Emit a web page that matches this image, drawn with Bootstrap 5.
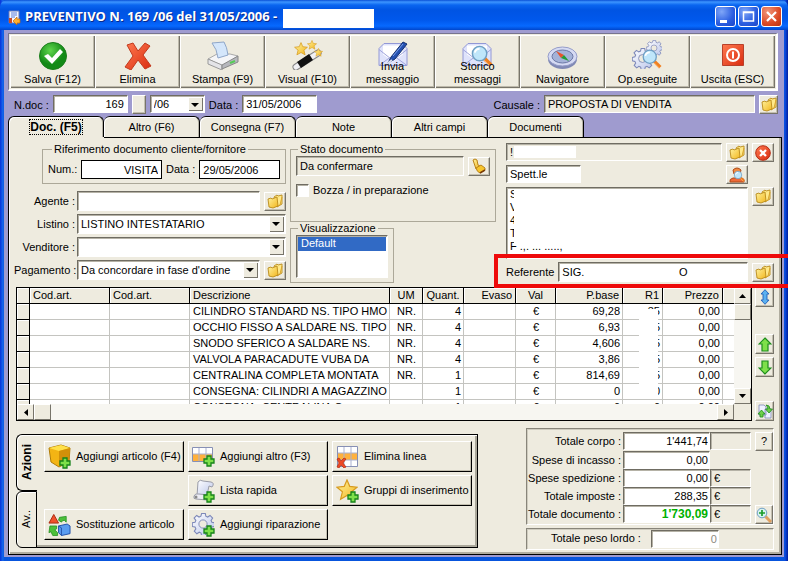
<!DOCTYPE html>
<html lang="it">
<head>
<meta charset="utf-8">
<meta name="viewport" content="width=device-width, initial-scale=1">
<title>Preventivo N. 169 /06</title>
<link href="https://cdn.jsdelivr.net/npm/bootstrap@5.3.0/dist/css/bootstrap.min.css" rel="stylesheet">
<style>
:root{--face:#eeebdf;--shade:#aca899;--dark:#7a776c;--lav:#9f9bcf}
body{font:11px/13px "Liberation Sans",Arial,sans-serif;color:#000;background:#0a3fd8}
button,input,select,textarea{font:inherit;color:inherit;border-radius:0}
label{white-space:nowrap}
svg{flex:none}
.win{min-height:100vh;background:linear-gradient(90deg,#0831d9,#166aee 3px,#0855dd 4px,#0855dd calc(100% - 4px),#0a4be0 calc(100% - 3px),#001d9e)}
.titlebar{height:30px;padding:2px 6px 0 8px;background:linear-gradient(#0a50d6,#3d95ff 2px,#0a66f0 5px,#0054e3 10px,#0058ec 20px,#0669ff 26px,#0046cc);border-radius:7px 7px 0 0}
.titlebar h1{font:bold 13px/16px "Open Sans","Noto Sans",sans-serif;color:#fff;text-shadow:1px 1px #0a2a8a;margin:2px 0 0 4px;white-space:nowrap}
.blank-title{width:91px;height:19px;background:#fff;margin:7px 0 0 6px}
.caps{gap:2px}
.cap{width:21px;height:21px;padding:0;border:1px solid #fff;border-radius:3px;background:radial-gradient(circle at 30% 25%,#7fa6f8,#2a5de0 60%,#1b46c8)}
.cap.shut{background:radial-gradient(circle at 30% 25%,#f0967a,#dc4a26 60%,#b83210)}
.cap svg{display:block}
.client{background:var(--lav);margin:0 4px 4px;padding:3px 2px 2px 4px}
.tools{margin:0 4px 0 0;padding:1px;background:var(--face);border:1px solid;border-color:#77748f #fff #fff #77748f;border-right-width:2px;border-bottom-width:2px}
.tool{flex:1 1 0;height:53px;padding:0 0 2px;background:var(--face);border:0;box-shadow:inset 1px 1px #fff,inset -1px -1px #77746a,inset -2px -2px #bdb9aa;display:flex;flex-direction:column;align-items:center;justify-content:flex-end}
.tool svg{margin-bottom:3px}
.tool.two svg{margin-bottom:-7px}
.info{padding:4px 4px 0 6px;height:25px}
.field{height:18px;padding:0 3px;background:#fff;border:1px solid;border-color:#6f6c62 #fff #fff #6f6c62;box-shadow:inset 1px 1px #b5b2a6;min-width:0;outline:0;border-radius:0}
.field.flat{background:var(--face)}
.field.line{border:1px solid #000;box-shadow:none;height:19px}
.field.tall{height:20px}
.field.cause{flex:0 1 211px}
.pick{position:relative;display:flex;min-width:0}
.pick select{appearance:none;width:100%;padding-right:17px}
.pick::before{content:"";position:absolute;right:2px;top:2px;bottom:2px;width:15px;background:var(--face);box-shadow:inset 1px 1px #fff,inset -1px -1px #77746a;pointer-events:none}
.pick::after{content:"";position:absolute;right:6px;top:8px;border:4px solid transparent;border-top-color:#000;border-bottom:0;pointer-events:none}
.mini{padding:0;width:22px;height:19px;background:var(--face);border:1px solid;border-color:#fff #77746a #77746a #fff;box-shadow:inset -1px -1px #c3bfb0;display:flex;align-items:center;justify-content:center;flex:none}
.w14{width:14px}.w19{width:19px}.w54{width:55px}.w75{width:75px}.w82{width:82px}.w41{width:41px;flex:none}.w17{width:18px;flex:none}
.sheets{height:21px}
.sheet{width:96px;height:21px;padding:0;border:1px solid #000;border-left-width:0;border-bottom:0;border-radius:6px 6px 0 0;background:var(--face);box-shadow:inset 1px 1px #fff,inset -1px 0 #b5b2a6}
.sheet.on{border-left-width:1px;height:22px;font-weight:bold;font-size:12px;position:relative}
.sheet.on span{outline:1px dotted #000}
.panelx{background:var(--face);border:1px solid #000;border-top:0;box-shadow:inset 1px 0 #fff,inset -2px -2px #b0ad9f;padding:6px 7px 4px 5px;position:relative;flex:1}
.panelx::before{content:"";position:absolute;left:95px;right:0;top:0;border-top:1px solid #000}
.head{display:grid;grid-template-columns:minmax(0,272fr) minmax(0,206fr) minmax(0,274fr);column-gap:4px}
.head>:last-child{margin-left:6px}
.group{border:1px solid var(--shade);box-shadow:none;padding:0 5px;margin:0;min-width:0}
.group legend{float:none;width:auto;font-size:11px;line-height:13px;margin:0 0 0 2px;padding:0 2px}
.cap-l{width:63px;text-align:right;padding-right:2px;flex:none}
.first{margin-left:28px}
.stack{gap:3px}
.tick{appearance:none;width:13px;height:13px;margin:0;background:#fff;border:1px solid;border-color:#6f6c62 #fff #fff #6f6c62;box-shadow:inset 1px 1px #b5b2a6}
.listing{width:92px;height:43px;padding:1px;overflow:hidden;display:block}
.listing option{padding:0 3px;min-height:14px;line-height:14px}
.listing option:checked{background:#316ac5 linear-gradient(#316ac5,#316ac5);color:#fff}
.group.view{width:104px}
.hide{position:absolute;background:#fff}
.beside{margin-right:26px}
.mask-name{left:8px;top:3px;width:62px;height:12px}
.mask-addr{left:8px;top:3px;width:72px;height:55px}
.memo{height:72px;resize:none;line-height:13px;padding:0 3px;overflow:hidden;display:block;width:100%}
.frame-red{position:absolute;left:-12px;right:-20px;top:111px;height:34px;border:4px solid #ee0a0a;pointer-events:none}
.gridbox{border:1px solid #000;background:#fff;margin-left:2px}
.rows{height:116px;overflow:hidden}
.rows table{table-layout:fixed;width:100%;border-collapse:separate;border-spacing:0;line-height:15px}
.rows th{font-weight:normal;background:var(--face);border-right:1px solid #000;border-bottom:1px solid #000;box-shadow:inset 1px 1px #fff;height:16px;padding:0 3px;white-space:nowrap;overflow:hidden}
.rows td{height:16px;padding:0 2px 0 3px;border-right:1px solid #c4c4c0;border-bottom:1px solid #c4c4c0;white-space:nowrap;overflow:hidden}
.rows td:first-child{background:var(--face);border-color:#000;box-shadow:inset 1px 1px #fff}
.rows td.open{overflow:visible;position:relative}
.open .hide{left:16px;right:4px;top:5px;height:86px}
.track{background:#f7f6f1}
.vtrack{width:17px}
.sb{width:17px;height:16px;padding:0;background:var(--face);border:1px solid;border-color:#fff #77746a #77746a #fff;display:flex;align-items:center;justify-content:center}
.side{width:19px;margin-left:3px}
.side .mini{width:19px;height:20px}
.gap-a{margin-top:27px}.gap-b{margin-top:3px}.gap-c{margin-top:24px}
.foot{margin:7px 0 0 2px}
.acts{margin-top:6px;flex:none}
.vtabs{width:21px;margin-right:-1px;position:relative}
.vtabs button{writing-mode:vertical-rl;transform:rotate(180deg);height:57px;width:21px;padding:0;border:1px solid #000;border-radius:0 6px 6px 0;background:var(--face);box-shadow:inset -1px -1px #fff}
.vtabs .on{border-left:0;font-weight:bold;font-size:12px}
.pad{border:1px solid #000;border-left:0;box-shadow:inset 0 1px #fff,inset -2px -2px #aaa79a;padding:6px 5px 7px 8px;display:grid;grid-template-columns:repeat(3,140px);grid-auto-rows:31px;gap:3px 4px}
.act{padding:0 0 0 3px;background:var(--face);border:1px solid;border-color:#fff #000 #000 #fff;box-shadow:inset -1px -1px #c3bfb0;display:flex;align-items:center;gap:5px;text-align:left;white-space:nowrap}
.sums{width:248px}
.sunk{border:1px solid;border-color:#88857a #fff #fff #88857a;box-shadow:inset 1px 1px #cfccbf}
.sunk label{text-align:right;padding:3px 2px 0 0}
.totbox{padding-top:3px;margin-bottom:3px}
.weight{padding-bottom:1px}
.tot{width:87px;text-align:right;padding-right:1px;flex:none}
.tot.short{width:68px;margin:1px 0 0 8px;color:#8d8a80}
.strong{color:#00b100;font-weight:bold;font-size:12px}
</style>
<script src="https://cdn.jsdelivr.net/npm/bootstrap@5.3.0/dist/js/bootstrap.bundle.min.js"></script>
</head>
<body>
<svg width="0" height="0" class="position-absolute" aria-hidden="true">
<defs>
<radialGradient id="gGreen" cx=".4" cy=".3"><stop offset="0" stop-color="#5fd64c"/><stop offset="1" stop-color="#138a17"/></radialGradient>
<linearGradient id="gRed" x2="1" y2="1"><stop offset="0" stop-color="#ff7a50"/><stop offset="1" stop-color="#d92c10"/></linearGradient>
<linearGradient id="gGold" x2="1" y2="1"><stop offset="0" stop-color="#fff3a0"/><stop offset="1" stop-color="#f2b61c"/></linearGradient>
<linearGradient id="gPaper" x2="1" y2="1"><stop offset="0" stop-color="#fff"/><stop offset="1" stop-color="#b9c4ea"/></linearGradient>
<symbol id="plus" viewBox="0 0 12 12"><path d="M4 1h4v3h3v4H8v3H4V8H1V4h3z" fill="#7ee04a" stroke="#16831a" stroke-width="1.3"/></symbol>
<symbol id="folder" viewBox="0 0 16 15"><path d="M7 3l3-2 1 1 4-1v9l-5 3z" fill="#ffe98a" stroke="#b98a1a" stroke-width=".9"/><path d="M1 5l3-1 1 1 5-2 1 9-5 2-4-1z" fill="url(#gGold)" stroke="#b98a1a" stroke-width=".9"/><path d="M11 12l2-1 2-8" fill="none" stroke="#d9a52a"/></symbol>
<symbol id="gear" viewBox="0 0 24 24"><path d="M10 1h4l.6 3 2 .9 2.600-1.700 2.800 2.800-1.700 2.600.9 2 3 .6v4l-3 .6-.9 2 1.700 2.600-2.800 2.800-2.600-1.700-2 .9-.6 3h-4l-.6-3-2-.9-2.600 1.700-2.800-2.800 1.700-2.600-.9-2-3-.6v-4l3-.6.9-2L1.800 6l2.800-2.800 2.600 1.700 2-.9z" transform="translate(.5 -.5)" fill="url(#gPaper)" stroke="#7d88b8" stroke-width="1.200"/><circle cx="12" cy="12" r="4.500" fill="#eeebdf" stroke="#7d88b8"/></symbol>
<symbol id="env" viewBox="0 0 30 24"><path d="M1 6l5-5h18l5 5v17H1z" fill="#dfe3fb" stroke="#9298d6"/><path d="M5 3h20v9l-10 7-10-7z" fill="#fff"/><path d="M1 7l14 11L29 7M1 23l11-8M29 23l-11-8" fill="none" stroke="#a0a5dc"/></symbol>
<symbol id="lens" viewBox="0 0 24 24"><path d="M15 15l7 7" stroke="#f08020" stroke-width="4"/><path d="M15 17l6 6" stroke="#ffc080"/><circle cx="10" cy="10" r="7.500" fill="#bfe6fa" stroke="#6f9fc4" stroke-width="1.500"/><path d="M5 9q1-4 5-4" stroke="#fff" stroke-width="2" fill="none"/></symbol>
<symbol id="star" viewBox="0 0 24 24"><path d="M12 1l3 7 8 1-6 5 2 8-7-4-7 4 2-8-6-5 8-1z" fill="url(#gGold)" stroke="#d79a1e" stroke-width="1.300"/></symbol>
<symbol id="sheetgrid" viewBox="0 0 21 21"><path d="M.5.500h20v20H.5z" fill="#fff" stroke="#8790b5"/><path d="M1 7h19v7H1z" fill="#ffb13d"/><path d="M7 1v19M14 1v19M1 7h19M1 14h19" stroke="#aab1d0"/></symbol>
<symbol id="arrowup" viewBox="0 0 14 15"><path d="M7 1l6 6H10v7H4V7H1z" fill="#7ee04a" stroke="#1d8d1d" stroke-width="1.200"/></symbol>
</defs>
</svg>

<main class="win d-flex flex-column">
<header class="titlebar d-flex align-items-start">
  <svg class="mt-2" width="13" height="16" viewBox="0 0 13 16"><path d="M1 1h10v12H1z" fill="#f4f6ff" stroke="#6878b8"/><path d="M3 3h6M3 5h6M3 7h4" stroke="#5f7fd8"/><path d="M1 8h3v5H1z" fill="#c84a2a"/><path d="M5 11l4-4v2h3v4H9v2z" fill="#ffb030" stroke="#c06a08" stroke-width=".7"/></svg>
  <h1 class="pt-1">PREVENTIVO N. 169 /06 del 31/05/2006 -</h1>
  <div class="blank-title"></div>
  <div class="caps d-flex ms-auto pt-1">
    <button class="cap" aria-label="Riduci"><svg width="19" height="19"><path d="M4 13h7v3H4z" fill="#fff"/></svg></button>
    <button class="cap" aria-label="Ingrandisci"><svg width="19" height="19"><path d="M4.500 5h10v9h-10zM4 5.500h11" fill="none" stroke="#fff" stroke-width="1.500"/></svg></button>
    <button class="cap shut" aria-label="Chiudi"><svg width="19" height="19"><path d="M5 5l9 9M14 5l-9 9" stroke="#fff" stroke-width="2.200"/></svg></button>
  </div>
</header>

<div class="client d-flex flex-column flex-grow-1">
<nav class="tools d-flex" aria-label="Comandi">
  <button class="tool"><svg width="28" height="28" viewBox="0 0 28 28"><circle cx="14" cy="14" r="13.500" fill="url(#gGreen)" stroke="#1b7d1b"/><path d="M5 14l4-2 4 4 8-9 3 3-11 12z" fill="#fff"/></svg>Salva (F12)</button>
  <button class="tool"><svg width="28" height="28" viewBox="0 0 28 28"><path d="M3 3l6-2 5 8 7-8 5 3-7 9 8 11-6 3-7-9-7 10-6-3 8-11z" fill="url(#gRed)" stroke="#c23a1e"/></svg>Elimina</button>
  <button class="tool"><svg width="32" height="29" viewBox="0 0 32 29"><path d="M1 18l9-5h13l8 2-15 10z" fill="#f5f5f7" stroke="#aaa"/><path d="M5 2l12-1q3 5 4 13l-10 3q-1-9-6-15z" fill="#d4e6fb" stroke="#8fa6c8"/><path d="M1 18l14 6v5L1 23z" fill="#e4e4e8" stroke="#999"/><path d="M15 24l16-9v6l-16 7z" fill="#b6b7bd" stroke="#888"/><path d="M23 22l5-2" stroke="#5c5" stroke-width="2"/></svg>Stampa (F9)</button>
  <button class="tool"><svg width="31" height="30" viewBox="0 0 31 30"><path d="M4 27L26 13" stroke="#888" stroke-width="7" stroke-linecap="round"/><path d="M4 27L26 13" stroke="#f1f1f5" stroke-width="5" stroke-linecap="round"/><path d="M7 25l12-8" stroke="#111" stroke-width="7"/><use href="#star" x="2" y="2" width="14" height="14"/><use href="#star" x="15" y="0" width="10" height="10"/><use href="#star" x="22" y="8" width="9" height="9"/></svg>Visual (F10)</button>
  <button class="tool two"><svg width="30" height="26" viewBox="0 0 30 26"><use href="#env" y="1" width="30" height="25"/><path d="M10 22l3-6L25 1l4 2-12 15z" fill="#2450b0" stroke="#14306e"/><path d="M10 22l4-3" stroke="#d8dcec" stroke-width="2"/><path d="M15 15L25 3" stroke="#7ca2ee"/></svg>Invia<br>messaggio</button>
  <button class="tool two"><svg width="32" height="26" viewBox="0 0 32 26"><use href="#env" y="1" width="30" height="25"/><use href="#lens" x="8" y="3" width="23" height="23"/></svg>Storico<br>messaggi</button>
  <button class="tool"><svg width="31" height="24" viewBox="0 0 31 24"><ellipse cx="15.500" cy="13" rx="14.500" ry="10" fill="#8089b5"/><ellipse cx="15.500" cy="10.500" rx="14.500" ry="9.500" fill="#d5daf3" stroke="#969dc9"/><ellipse cx="15.500" cy="10.500" rx="10.500" ry="6.500" fill="#a4b2d8" stroke="#6b77a5"/><path d="M9 5l8 4-3 3z" fill="#e8522a"/><path d="M22 15l-8-3 3-3z" fill="#259b35"/></svg>Navigatore</button>
  <button class="tool"><svg width="31" height="30" viewBox="0 0 31 30"><use href="#gear" x="14" y="0" width="16" height="16"/><use href="#gear" x="0" y="8" width="21" height="21"/><use href="#lens" x="9" y="8" width="21" height="21"/></svg>Op.eseguite</button>
  <button class="tool"><svg width="22" height="26" viewBox="0 0 22 26"><path d="M.5.500h21v21H.5z" fill="url(#gRed)" stroke="#b8402a"/><circle cx="11" cy="11" r="6" fill="none" stroke="#fff" stroke-width="2"/><path d="M11 7.500v7" stroke="#fff" stroke-width="2"/></svg>Uscita (ESC)</button>
</nav>

<div class="info d-flex align-items-start">
  <label for="ndoc" class="me-1 pt-1">N.doc :</label>
  <input id="ndoc" class="field w75 text-end" value="169">
  <button class="mini w14 mx-1" aria-label="Numero"></button>
  <div class="pick w54"><select id="anno" class="field" aria-label="Anno"><option>/06</option></select></div>
  <label for="data" class="mx-1 pt-1">Data :</label>
  <input id="data" class="field w75" value="31/05/2006">
  <label for="causale" class="ms-auto me-1 pt-1">Causale :</label>
  <input id="causale" class="field flat cause" value="PROPOSTA DI VENDITA">
  <button class="mini w19 ms-1" aria-label="Apri causale"><svg width="16" height="15"><use href="#folder"/></svg></button>
</div>

<div class="sheets d-flex" role="tablist">
  <button class="sheet on" role="tab" aria-selected="true"><span>Doc. (F5)</span></button>
  <button class="sheet" role="tab">Altro (F6)</button>
  <button class="sheet" role="tab">Consegna (F7)</button>
  <button class="sheet" role="tab">Note</button>
  <button class="sheet" role="tab">Altri campi</button>
  <button class="sheet" role="tab">Documenti</button>
</div>

<div class="panelx">
<div class="head">
  <div class="d-flex flex-column stack">
    <fieldset class="group first pb-1"><legend class="ms-1">Riferimento documento cliente/fornitore</legend>
      <div class="d-flex align-items-center pt-1">
        <label for="num" class="me-1">Num.:</label><input id="num" class="field line w82 text-end flex-fill" value="VISITA">
        <label for="data2" class="mx-1">Data :</label><input id="data2" class="field line w82 flex-fill" value="29/05/2006">
      </div>
    </fieldset>
    <div class="d-flex align-items-center mt-1"><label for="agente" class="cap-l">Agente :</label><input id="agente" class="field tall flex-fill me-1"><button class="mini" aria-label="Apri agente"><svg width="16" height="15"><use href="#folder"/></svg></button></div>
    <div class="d-flex align-items-center"><label for="listino" class="cap-l">Listino :</label><div class="pick flex-fill"><select id="listino" class="field tall"><option>LISTINO INTESTATARIO</option></select></div></div>
    <div class="d-flex align-items-center"><label for="vend" class="cap-l">Venditore :</label><div class="pick flex-fill"><select id="vend" class="field tall"><option></option></select></div></div>
    <div class="d-flex align-items-center"><label for="pag" class="cap-l">Pagamento :</label><div class="pick flex-fill me-1"><select id="pag" class="field tall"><option>Da concordare in fase d'ordine</option></select></div><button class="mini" aria-label="Apri pagamento"><svg width="16" height="15"><use href="#folder"/></svg></button></div>
  </div>

  <div>
    <fieldset class="group pb-4"><legend>Stato documento</legend>
      <div class="d-flex align-items-center"><input class="field flat tall flex-fill me-1" aria-label="Stato documento" value="Da confermare"><button class="mini" aria-label="Cambia stato"><svg width="16" height="16" viewBox="0 0 16 16"><path d="M2 2q2-2 4 0l1 5 2 1-4 3-1-3z" fill="url(#gGold)" stroke="#b9831a"/><path d="M5 10l5-3 4 3v2l-5 3q-3-1-4-5z" fill="#f7c52c" stroke="#b9831a"/><path d="M9 15l5-3" stroke="#7a3c08" stroke-width="1.500"/></svg></button></div>
      <div class="d-flex align-items-center pt-2"><input type="checkbox" id="bozza" class="tick me-1"><label for="bozza">Bozza / in preparazione</label></div>
    </fieldset>
    <fieldset class="group view pb-1"><legend>Visualizzazione</legend>
      <select class="field listing" size="3" aria-label="Visualizzazione"><option selected>Default</option></select>
    </fieldset>
  </div>

  <div class="position-relative">
    <div class="d-flex flex-column stack">
      <div class="d-flex"><div class="d-flex flex-fill position-relative"><input class="field flat w-100" aria-label="Cliente" value="!"><span class="hide mask-name"></span></div><button class="mini mx-1" aria-label="Apri cliente"><svg width="16" height="15"><use href="#folder"/></svg></button><button class="mini" aria-label="Rimuovi cliente"><svg width="16" height="16" viewBox="0 0 16 16"><circle cx="8" cy="8" r="7.300" fill="url(#gRed)" stroke="#b52a12"/><path d="M5 5l6 6M11 5l-6 6" stroke="#fff" stroke-width="2.300"/></svg></button></div>
      <div class="d-flex beside"><input class="field w75" aria-label="Titolo" value="Spett.le"><button class="mini ms-auto" aria-label="Cerca"><svg width="18" height="16" viewBox="0 0 18 16"><path d="M5 3q4-4 8 0l-1 4H6z" fill="#f08a40" stroke="#b04a18"/><path d="M2 15q-1-3 3-4h9q3 1 2 4z" fill="#ee6a38" stroke="#b04a18"/><use href="#lens" x="5" y="3" width="12" height="12"/></svg></button></div>
      <div class="d-flex align-items-start"><div class="flex-fill position-relative"><textarea class="field memo" aria-label="Indirizzo">S
V
4
T
F .,. ... .....,</textarea><span class="hide mask-addr"></span></div><button class="mini ms-1" aria-label="Apri indirizzo"><svg width="16" height="15"><use href="#folder"/></svg></button></div>
      <div class="d-flex align-items-center"><label for="ref" class="me-1">Referente</label><input id="ref" class="field tall flex-fill" value="SIG.                               O"><button class="mini ms-1" aria-label="Apri referente"><svg width="16" height="15"><use href="#folder"/></svg></button></div>
    </div>
    <div class="frame-red"></div>
  </div>
</div>

<div class="d-flex pt-1">
  <div class="gridbox flex-fill">
    <div class="d-flex">
      <div class="rows flex-fill"><table>
        <colgroup><col style="width:13px"><col style="width:80px"><col style="width:80px"><col style="width:200px"><col style="width:33px"><col style="width:41px"><col style="width:52px"><col style="width:40px"><col style="width:67px"><col style="width:40px"><col style="width:60px"><col style="width:11px"></colgroup>
        <thead><tr><th></th><th>Cod.art.</th><th>Cod.art.</th><th>Descrizione</th><th class="text-center">UM</th><th class="text-center">Quant.</th><th class="text-end">Evaso</th><th class="text-center">Val</th><th class="text-end">P.base</th><th class="text-end">R1</th><th class="text-end">Prezzo</th><th class="border-end-0"></th></tr></thead>
        <tbody>
        <tr><td></td><td></td><td></td><td>CILINDRO STANDARD NS. TIPO HMO</td><td class="text-center">NR.</td><td class="text-end">4</td><td></td><td class="text-center">€</td><td class="text-end">69,28</td><td class="text-end open">35<span class="hide"></span></td><td class="text-end">0,00</td><td class="border-end-0"></td></tr>
        <tr><td></td><td></td><td></td><td>OCCHIO FISSO A SALDARE NS. TIPO</td><td class="text-center">NR.</td><td class="text-end">4</td><td></td><td class="text-center">€</td><td class="text-end">6,93</td><td class="text-end">5</td><td class="text-end">0,00</td><td class="border-end-0"></td></tr>
        <tr><td></td><td></td><td></td><td>SNODO SFERICO A SALDARE NS.</td><td class="text-center">NR.</td><td class="text-end">4</td><td></td><td class="text-center">€</td><td class="text-end">4,606</td><td class="text-end">5</td><td class="text-end">0,00</td><td class="border-end-0"></td></tr>
        <tr><td></td><td></td><td></td><td>VALVOLA PARACADUTE VUBA DA</td><td class="text-center">NR.</td><td class="text-end">4</td><td></td><td class="text-center">€</td><td class="text-end">3,86</td><td class="text-end">5</td><td class="text-end">0,00</td><td class="border-end-0"></td></tr>
        <tr><td></td><td></td><td></td><td>CENTRALINA COMPLETA MONTATA</td><td class="text-center">NR.</td><td class="text-end">1</td><td></td><td class="text-center">€</td><td class="text-end">814,69</td><td class="text-end">5</td><td class="text-end">0,00</td><td class="border-end-0"></td></tr>
        <tr><td></td><td></td><td></td><td>CONSEGNA: CILINDRI A MAGAZZINO</td><td></td><td class="text-end">1</td><td></td><td class="text-center">€</td><td class="text-end">0</td><td class="text-end">0</td><td class="text-end">0,00</td><td class="border-end-0"></td></tr>
        <tr><td></td><td></td><td></td><td>CONSEGNA: CENTRALINA G</td><td></td><td class="text-end">1</td><td></td><td class="text-center">€</td><td class="text-end">0</td><td class="text-end">0</td><td class="text-end">0,00</td><td class="border-end-0"></td></tr>
        </tbody>
      </table></div>
      <div class="track vtrack d-flex flex-column">
        <button class="sb" aria-label="Su"><svg width="7" height="4"><path d="M0 4l3.500-4L7 4z"/></svg></button>
        <div class="sb"></div>
        <button class="sb mt-auto" aria-label="Giù"><svg width="7" height="4"><path d="M0 0l3.500 4L7 0z"/></svg></button>
      </div>
    </div>
    <div class="track d-flex">
      <button class="sb" aria-label="Sinistra"><svg width="4" height="7"><path d="M4 0L0 3.500 4 7z"/></svg></button>
      <div class="sb"></div>
      <button class="sb ms-auto" aria-label="Destra"><svg width="4" height="7"><path d="M0 0l4 3.500L0 7z"/></svg></button>
      <div class="sb border-0"></div>
    </div>
  </div>
  <div class="side d-flex flex-column">
    <button class="mini" aria-label="Sposta"><svg width="10" height="16" viewBox="0 0 10 16"><path d="M5 .7l4 4.300H7v6h2l-4 4.300L1 11h2V5H1z" fill="#5ab0f0" stroke="#1f5fb8" stroke-width=".9"/></svg></button>
    <button class="mini gap-a" aria-label="Riga su"><svg width="14" height="15"><use href="#arrowup"/></svg></button>
    <button class="mini gap-b" aria-label="Riga giù"><svg width="14" height="15" viewBox="0 0 14 15"><use href="#arrowup" width="14" height="15" transform="rotate(180 7 7.500)"/></svg></button>
    <button class="mini gap-c" aria-label="Aggiorna"><svg width="16" height="15" viewBox="0 0 16 15"><path d="M2 1h5l2 2v8H2zM8 5h6v9H8z" fill="#eef1ff" stroke="#7d88b8" stroke-width=".8"/><path d="M4.500 6l3.500 4H6v3H3v-3H1z" fill="#6fd04a" stroke="#1d8d1d" stroke-width=".8"/><path d="M9 1q4 0 4 4h2.500L12 9 8.500 5H11q0-2-2-4z" fill="#6fd04a" stroke="#1d8d1d" stroke-width=".8"/></svg></button>
  </div>
</div>

<div class="foot d-flex justify-content-between align-items-start">
  <div class="acts d-flex">
    <div class="vtabs d-flex flex-column" role="tablist"><button class="on" role="tab" aria-selected="true">Azioni</button><button role="tab">Av..</button></div>
    <div class="pad">
      <button class="act"><svg width="23" height="25" viewBox="0 0 23 25"><path d="M1 4l12-3 9 3-1 14-10 5-8-5z" fill="#f3b414" stroke="#b07c08"/><path d="M1 4l10 3 11-3-9-3z" fill="#ffe04a"/><path d="M11 7v16l10-5 1-14z" fill="#d2900a"/><use href="#plus" x="11" y="13" width="12" height="12"/></svg>Aggiungi articolo (F4)</button>
      <button class="act"><svg width="23" height="20" viewBox="0 0 23 20"><path d="M.5.500h20v14H.5z" fill="#fff" stroke="#8790b5"/><path d="M1 7h19v7H1z" fill="#ffb13d"/><path d="M7 1v13M14 1v13M1 7h19" stroke="#aab1d0"/><use href="#plus" x="11" y="8" width="12" height="12"/></svg>Aggiungi altro (F3)</button>
      <button class="act"><svg width="23" height="22" viewBox="0 0 23 22"><use href="#sheetgrid" x="1" width="21" height="21"/><path d="M1 13l2-1 2 3 3-3 2 1-3 4 3 4-2 1-3-3-2 3-2-1 2-4z" fill="#ee4a26" stroke="#b02a10" stroke-width=".7"/></svg>Elimina linea</button>
      <span></span>
      <button class="act"><svg width="23" height="24" viewBox="0 0 23 24"><path d="M6 3q2-3 5-1l8 1q4 1 1 5l-3-1-2 9-10 1z" fill="url(#gPaper)" stroke="#9a9ca8"/><path d="M2 17q1-3 5-2l9 1q2 3-1 5L4 20q-3 0-2-3z" fill="#ececf4" stroke="#9a9ca8"/><circle cx="4" cy="18" r="1.500" fill="#888"/><use href="#plus" x="11" y="12" width="12" height="12"/></svg>Lista rapida</button>
      <button class="act"><svg width="23" height="24" viewBox="0 0 23 24"><use href="#star" width="22" height="22"/><use href="#plus" x="11" y="12" width="12" height="12"/></svg>Gruppi di inserimento</button>
      <button class="act"><svg width="23" height="24" viewBox="0 0 24 24"><path d="M6 1l5 9H1z" fill="#f0502a" stroke="#a82a10"/><path d="M12 4l7-1v6l-2-2q-2 0-3 2l-3-2zM2 13h7v3l-2 1 3 3v3H5l-2-4-2 1z" fill="#4cbf3a" stroke="#1d8d1d" stroke-width=".8"/><path d="M11 13l9-2 3 2v8l-9 2-3-3z" fill="#5a9cf0" stroke="#2250a8"/><path d="M11 13l3 2v8" fill="none" stroke="#2250a8"/></svg>Sostituzione articolo</button>
      <button class="act"><svg width="23" height="24" viewBox="0 0 23 24"><use href="#gear" width="22" height="22"/><use href="#plus" x="11" y="12" width="12" height="12"/></svg>Aggiungi riparazione</button>
    </div>
  </div>
  <div class="sums">
    <div class="sunk totbox">
      <div class="d-flex"><label class="flex-fill" for="t1">Totale corpo :</label><input id="t1" class="field tot" value="1'441,74"><input class="field flat w41" aria-label="Valuta corpo"><button class="mini w17 ms-1" aria-label="Aiuto">?</button></div>
      <div class="d-flex"><label class="flex-fill" for="t2">Spese di incasso :</label><input id="t2" class="field tot" value="0,00"><span class="w41"></span><span class="w17 ms-1"></span></div>
      <div class="d-flex"><label class="flex-fill" for="t3">Spese spedizione :</label><input id="t3" class="field tot" value="0,00"><input class="field flat w41" aria-label="Valuta spedizione" value="€"><span class="w17 ms-1"></span></div>
      <div class="d-flex"><label class="flex-fill" for="t4">Totale imposte :</label><input id="t4" class="field tot" value="288,35"><input class="field flat w41" aria-label="Valuta imposte" value="€"><span class="w17 ms-1"></span></div>
      <div class="d-flex"><label class="flex-fill" for="t5">Totale documento :</label><input id="t5" class="field tot strong" value="1'730,09"><input class="field flat w41" aria-label="Valuta documento" value="€"><button class="mini w17 ms-1" aria-label="Dettaglio"><svg width="16" height="16" viewBox="0 0 16 16"><path d="M9 9l6 6" stroke="#e0a060" stroke-width="3"/><circle cx="6" cy="6" r="4.800" fill="#d8f2f0" stroke="#6f9fc4"/><path d="M6 3v6M3 6h6" stroke="#1d9d2d" stroke-width="1.700"/></svg></button></div>
    </div>
    <div class="sunk weight d-flex"><label class="ps-4" for="t6">Totale peso lordo :</label><input id="t6" class="field tot short" value="0"></div>
  </div>
</div>
</div>
</div>
</main>
</body>
</html>
